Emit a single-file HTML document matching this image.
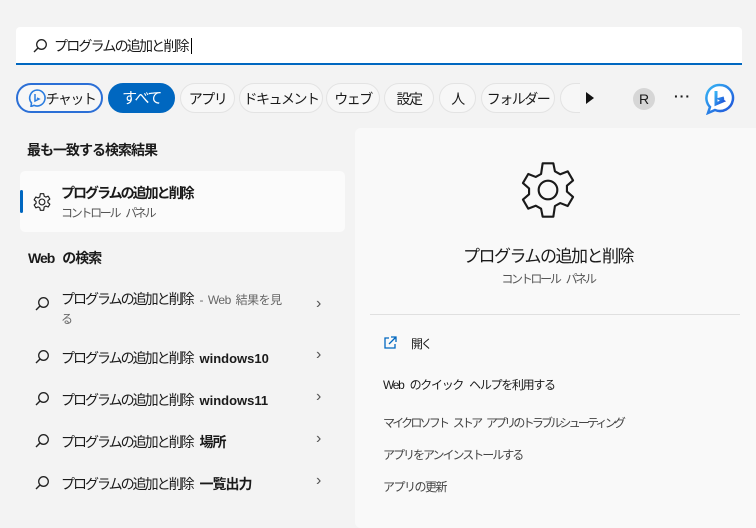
<!DOCTYPE html><html><head><meta charset="utf-8"><style>
body{margin:0;width:756px;height:517px;background:#f3f3f3;font-family:"Liberation Sans","Noto Sans CJK JP",sans-serif;color:#1a1a1a;position:relative;overflow:hidden}
.a{position:absolute;white-space:nowrap}
.search{left:16px;top:27px;width:726px;height:36px;background:#fff;border-bottom:2px solid #0067c0;border-radius:4px 4px 0 0}
.chip{position:absolute;top:83px;height:30px;border:1px solid #e3e3e3;border-radius:16px;background:#f7f7f7;font-size:14px;letter-spacing:-1.5px;line-height:30px;text-align:center;box-sizing:border-box;white-space:nowrap}
.t{font-size:14px;white-space:nowrap;letter-spacing:-2px;word-spacing:5px}
.t b{letter-spacing:0}
.chev{position:absolute;left:316px;font-size:16px;color:#555}
.s{font-size:12px;letter-spacing:-2.3px;word-spacing:5px}
</style></head><body>
<div class="a search"></div>
<svg class="a" style="left:32px;top:38px" width="16" height="16" viewBox="0 0 16 16"><circle cx="9.5" cy="6.5" r="4.8" fill="none" stroke="#222" stroke-width="1.3"/><path d="M6 10L2 14" stroke="#222" stroke-width="1.4"/></svg>
<div class="a t" style="left:54px;top:36px;font-size:14px;letter-spacing:-1.8px">プログラムの追加と削除<span style="border-left:1px solid #000;margin-left:3px"></span></div>

<div class="chip" style="left:16px;width:87px;border:2px solid #2b6fd6;background:#f7f7f7;line-height:28px;padding-left:22px">チャット</div>
<svg class="a" style="left:28px;top:89px" width="18" height="18" viewBox="0 0 18 18"><path d="M9 1a8 8 0 1 1-3 15.4L3 17.5 3.5 14A8 8 0 0 1 9 1z" fill="none" stroke="#2b7de0" stroke-width="1.6"/><path d="M7 5v7l4-2-2-1" fill="none" stroke="#2b7de0" stroke-width="1.5"/></svg>
<div class="chip" style="left:108px;width:67px;background:#0067c0;border-color:#0067c0;color:#fff;font-size:15px">すべて</div>
<div class="chip" style="left:180px;width:55px">アプリ</div>
<div class="chip" style="left:239px;width:84px">ドキュメント</div>
<div class="chip" style="left:326px;width:54px">ウェブ</div>
<div class="chip" style="left:384px;width:50px">設定</div>
<div class="chip" style="left:439px;width:37px">人</div>
<div class="chip" style="left:481px;width:74px">フォルダー</div>
<div class="chip" style="left:560px;width:20px;border-right:none;border-radius:16px 0 0 16px"></div>
<svg class="a" style="left:584px;top:91px" width="12" height="14"><path d="M2 1L10 7 2 13z" fill="#111"/></svg>
<div class="a" style="left:633px;top:88px;width:22px;height:22px;border-radius:50%;background:#d6d6d6;font-size:14px;line-height:22px;text-align:center">R</div>
<div class="a" style="left:674px;top:88px;font-size:14px;font-weight:bold;letter-spacing:1px">···</div>
<svg class="a" style="left:704px;top:83px" width="32" height="32" viewBox="0 0 32 32"><defs><linearGradient id="g" x1="0" y1="0" x2="1" y2="1"><stop offset="0" stop-color="#37b6f5"/><stop offset="1" stop-color="#1d4fd8"/></linearGradient></defs><path d="M16 2a13 13 0 1 1-5 25l-7 3 2-6A13 13 0 0 1 16 2z" fill="#fff" stroke="url(#g)" stroke-width="2.5"/><path d="M12 8v13l7-3-3-2 4-1" fill="none" stroke="url(#g)" stroke-width="3"/></svg>

<div class="a t" style="left:27px;top:140px;font-weight:bold;letter-spacing:-1px">最も一致する検索結果</div>
<div class="a" style="left:20px;top:171px;width:325px;height:61px;background:#fbfbfb;border-radius:5px"></div>
<div class="a" style="left:20px;top:190px;width:3px;height:23px;background:#0067c0;border-radius:2px"></div>
<svg class="a" style="left:32px;top:192px" width="20" height="20" viewBox="0 0 24 24"><path d="M12 8.5a3.5 3.5 0 1 0 0 7 3.5 3.5 0 0 0 0-7zM10 2h4l.6 3 2 1.1 2.8-1.1 2 3.4-2.3 2v2.2l2.3 2-2 3.4-2.8-1.1-2 1.1L14 22h-4l-.6-3-2-1.1-2.8 1.1-2-3.4 2.3-2v-2.2l-2.3-2 2-3.4 2.8 1.1 2-1.1z" fill="none" stroke="#222" stroke-width="1.4" stroke-linejoin="round"/></svg>
<div class="a t" style="left:61px;top:183px;font-weight:bold">プログラムの追加と削除</div>
<div class="a s" style="left:61px;top:204px;color:#555">コントロール パネル</div>

<div class="a t" style="left:28px;top:248px;font-weight:bold;letter-spacing:-1px">Web の検索</div>

<svg class="a" style="left:34px;top:296px" width="16" height="16" viewBox="0 0 16 16"><circle cx="9.5" cy="6.5" r="4.8" fill="none" stroke="#222" stroke-width="1.3"/><path d="M6 10L2 14" stroke="#222" stroke-width="1.4"/></svg>
<div class="a t" style="left:61px;top:289px">プログラムの追加と削除 <span style="font-size:12px;color:#666;letter-spacing:-0.5px;word-spacing:2px">- Web 結果を見</span></div>
<div class="a" style="left:61px;top:310px;font-size:12px;color:#666">る</div>
<div class="chev" style="top:295px">›</div>

<svg class="a" style="left:34px;top:349px" width="16" height="16" viewBox="0 0 16 16"><circle cx="9.5" cy="6.5" r="4.8" fill="none" stroke="#222" stroke-width="1.3"/><path d="M6 10L2 14" stroke="#222" stroke-width="1.4"/></svg>
<div class="a t" style="left:61px;top:348px">プログラムの追加と削除 <b style="font-size:13px">windows10</b></div><div class="chev" style="top:346px">›</div>
<svg class="a" style="left:34px;top:391px" width="16" height="16" viewBox="0 0 16 16"><circle cx="9.5" cy="6.5" r="4.8" fill="none" stroke="#222" stroke-width="1.3"/><path d="M6 10L2 14" stroke="#222" stroke-width="1.4"/></svg>
<div class="a t" style="left:61px;top:390px">プログラムの追加と削除 <b style="font-size:13px">windows11</b></div><div class="chev" style="top:388px">›</div>
<svg class="a" style="left:34px;top:433px" width="16" height="16" viewBox="0 0 16 16"><circle cx="9.5" cy="6.5" r="4.8" fill="none" stroke="#222" stroke-width="1.3"/><path d="M6 10L2 14" stroke="#222" stroke-width="1.4"/></svg>
<div class="a t" style="left:61px;top:432px">プログラムの追加と削除 <b style="letter-spacing:-1px">場所</b></div><div class="chev" style="top:430px">›</div>
<svg class="a" style="left:34px;top:475px" width="16" height="16" viewBox="0 0 16 16"><circle cx="9.5" cy="6.5" r="4.8" fill="none" stroke="#222" stroke-width="1.3"/><path d="M6 10L2 14" stroke="#222" stroke-width="1.4"/></svg>
<div class="a t" style="left:61px;top:474px">プログラムの追加と削除 <b style="letter-spacing:-1px">一覧出力</b></div><div class="chev" style="top:472px">›</div>

<div class="a" style="left:355px;top:128px;width:410px;height:400px;background:#f9f9f9;border-radius:6px"></div>
<svg class="a" style="left:516px;top:158px" width="64" height="64" viewBox="0 0 24 24"><path d="M12 8.5a3.5 3.5 0 1 0 0 7 3.5 3.5 0 0 0 0-7zM10 2h4l.6 3 2 1.1 2.8-1.1 2 3.4-2.3 2v2.2l2.3 2-2 3.4-2.8-1.1-2 1.1L14 22h-4l-.6-3-2-1.1-2.8 1.1-2-3.4 2.3-2v-2.2l-2.3-2 2-3.4 2.8 1.1 2-1.1z" fill="none" stroke="#1a1a1a" stroke-width=".8" stroke-linejoin="round"/></svg>
<div class="a" style="left:355px;width:386px;top:242px;text-align:center;font-size:17px;letter-spacing:-1.5px">プログラムの追加と削除</div>
<div class="a s" style="left:355px;width:386px;top:270px;text-align:center;color:#555">コントロール パネル</div>
<div class="a" style="left:370px;top:314px;width:370px;height:1px;background:#e0e0e0"></div>
<svg class="a" style="left:383px;top:336px" width="14" height="14" viewBox="0 0 14 14"><path d="M6 2H2v10h10V8M8 1h5v5M13 1L6 8" fill="none" stroke="#0067c0" stroke-width="1.3"/></svg>
<div class="a s" style="left:411px;top:335px">開く</div>
<div class="a" style="left:383px;top:376px;font-size:12px;letter-spacing:-1.3px;word-spacing:4px">Web のクイック ヘルプを利用する</div>
<div class="a s" style="left:383px;top:414px;color:#444;letter-spacing:-2.8px">マイクロソフト ストア アプリのトラブルシューティング</div>
<div class="a s" style="left:383px;top:446px;color:#444;letter-spacing:-2px">アプリをアンインストールする</div>
<div class="a s" style="left:383px;top:478px;color:#444;letter-spacing:-1.5px">アプリの更新</div>
</body></html>
